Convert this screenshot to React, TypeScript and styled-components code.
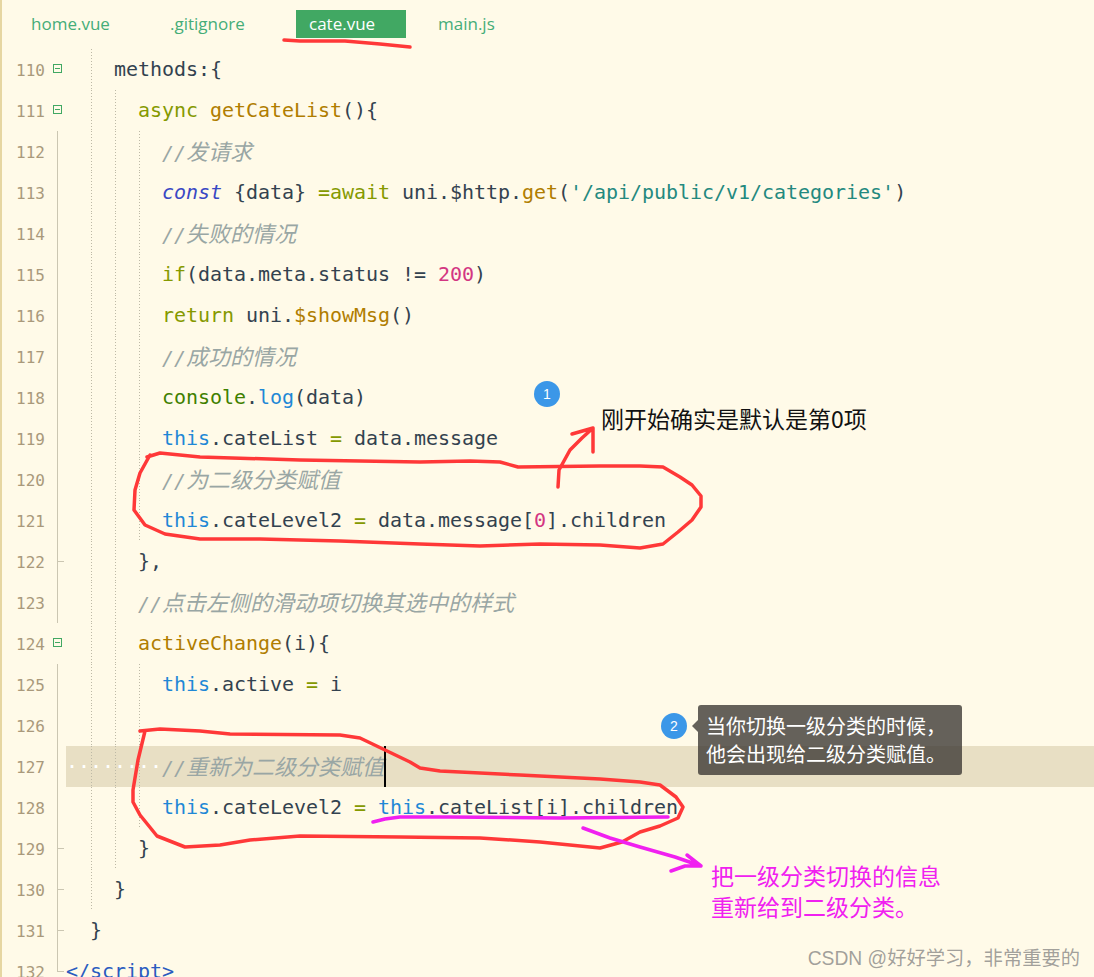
import { createGlobalStyle, styled } from "styled-components";

const GlobalStyle = createGlobalStyle`
  html, body {
    margin: 0;
    padding: 0;
    background: #fffae8;
  }
`;

const Page = styled.div`
  position: relative;
  width: 1094px;
  height: 977px;
  overflow: hidden;
  box-sizing: border-box;
  border-left: 2px solid #e6d6a2;
  background: #fffae8;
`;

const TabBar = styled.div`
  display: flex;
  align-items: flex-start;
  gap: 32px;
  height: 49px;
  padding: 10px 0 0 29px;
  box-sizing: border-box;
  font-family: "Open Sans", "Noto Sans", sans-serif;
  font-size: 17px;
`;

const Tab = styled.div<{ $active?: boolean; $width: number }>`
  width: ${(props) => props.$width}px;
  height: 28px;
  line-height: 28px;
  box-sizing: border-box;
  padding-left: ${(props) => (props.$active ? "13px" : "0")};
  color: ${(props) => (props.$active ? "#ffffff" : "#45ad78")};
  background: ${(props) => (props.$active ? "#41a863" : "transparent")};
`;

const Row = styled.div`
  display: flex;
  height: 41px;
  line-height: 41px;
  font-family: "DejaVu Sans Mono", "Noto Sans CJK SC", monospace;
  font-size: 20px;
  letter-spacing: -0.04px;
  color: #33424f;
`;

const LineNo = styled.div`
  width: 43px;
  flex: none;
  text-align: right;
  font-size: 16px;
  line-height: 44px;
  letter-spacing: 0;
  color: #a9997b;
`;

const Fold = styled.div`
  display: flex;
  align-items: center;
  width: 21px;
  padding-left: 12px;
  box-sizing: border-box;
  flex: none;
`;

const FoldLine = styled.span<{ $half?: boolean }>`
  align-self: flex-start;
  width: 1px;
  height: ${(props) => (props.$half ? "50%" : "100%")};
  background: #cbc6b2;
`;

const FoldTick = styled.span`
  width: 6px;
  height: 1px;
  background: #cbc6b2;
`;

const FoldBox = styled.span`
  display: flex;
  align-items: center;
  justify-content: center;
  width: 9px;
  height: 9px;
  margin: 0 0 2px -4px;
  box-sizing: border-box;
  border: 1px solid #41a863;

  &::after {
    content: "";
    width: 5px;
    height: 1px;
    background: #41a863;
  }
`;

const Code = styled.div<{ $active?: boolean }>`
  flex: 1;
  display: flex;
  white-space: pre;
  background: ${(props) => (props.$active ? "#e8dfc4" : "transparent")};
`;

const Indent = styled.span<{ $guide: boolean }>`
  width: 24px;
  flex: none;
  color: #ffffff;
  font-size: 20px;
  letter-spacing: 0;
  overflow: hidden;
  background-image: ${(props) =>
    props.$guide
      ? "repeating-linear-gradient(to bottom, #bdb9a6 0 1px, transparent 1px 3px)"
      : "none"};
  background-size: 1px 100%;
  background-position: 1px 0;
  background-repeat: no-repeat;
`;

const colors = {
  plain: "#33424f",
  key: "#859900",
  fn: "#b07d00",
  self: "#1f88d6",
  decl: "#3a48c4",
  tag: "#2a5cc0",
  str: "#24897f",
  num: "#d33682",
  green: "#3f8000",
};

const Token = styled.span<{ $kind: keyof typeof colors }>`
  color: ${(props) => colors[props.$kind]};
  font-style: ${(props) => (props.$kind === "decl" ? "italic" : "normal")};
`;

const Comment = styled.span`
  color: #99a6a4;
  font-style: italic;
  font-family: "Noto Sans CJK SC", sans-serif;
  font-size: 22px;
  line-height: 39px;
  letter-spacing: 0;
`;

const Slashes = styled.span`
  font-family: "DejaVu Sans Mono", monospace;
  font-size: 20px;
`;

const Caret = styled.span`
  width: 2px;
  flex: none;
  background: #000000;
`;

const Scribbles = styled.svg`
  position: absolute;
  left: -2px;
  top: 0;
  width: 1094px;
  height: 977px;
  fill: none;
  stroke-linejoin: round;
  stroke-linecap: round;
  stroke-width: 3.5;
  pointer-events: none;
`;

const Callout = styled.div<{ $gap: number; $left: number; $top: number }>`
  position: absolute;
  left: ${(props) => props.$left}px;
  top: ${(props) => props.$top}px;
  display: flex;
  align-items: flex-start;
  gap: ${(props) => props.$gap}px;
`;

const Badge = styled.div<{ $drop?: number }>`
  flex: none;
  width: 26px;
  height: 26px;
  margin-top: ${(props) => props.$drop ?? 0}px;
  border-radius: 50%;
  background: #3b97e8;
  color: #ffffff;
  font-family: "Liberation Sans", sans-serif;
  font-size: 14px;
  line-height: 26px;
  text-align: center;
`;

const Bubble = styled.div`
  position: relative;
  width: 264px;
  height: 70px;
  box-sizing: border-box;
  padding: 7px 8px;
  border-radius: 3px;
  background: rgba(58, 54, 50, 0.78);
  color: #ffffff;
  font-family: "Noto Sans CJK SC", sans-serif;
  font-size: 20px;
  line-height: 28px;
  white-space: pre;

  &::before {
    content: "";
    position: absolute;
    left: -6px;
    top: 15px;
    border: 6px solid transparent;
    border-left: 0;
    border-right-color: rgba(58, 54, 50, 0.78);
  }
`;

const Note = styled.div<{ $color: string; $drop?: number }>`
  margin-top: ${(props) => props.$drop ?? 0}px;
  color: ${(props) => props.$color};
  font-family: "Noto Sans CJK SC", sans-serif;
  font-size: 23px;
  line-height: 31px;
  white-space: pre;
`;

const Watermark = styled.div`
  position: absolute;
  right: 14px;
  bottom: 5px;
  color: rgba(120, 120, 120, 0.7);
  font-family: "Liberation Sans", "Noto Sans CJK SC", sans-serif;
  font-size: 19.3px;
  line-height: 26px;
  white-space: pre;
`;

type Kind = keyof typeof colors;
type Piece = [Kind, string];

interface Line {
  n: number;
  depth: number;
  fold?: "box" | "line" | "tick" | "end";
  comment?: string;
  active?: boolean;
  code?: Piece[];
}

const lines: Line[] = [
  { n: 110, depth: 2, fold: "box", code: [["plain", "methods:{"]] },
  {
    n: 111,
    depth: 3,
    fold: "box",
    code: [
      ["key", "async "],
      ["fn", "getCateList"],
      ["plain", "(){"],
    ],
  },
  { n: 112, depth: 4, fold: "line", comment: "发请求" },
  {
    n: 113,
    depth: 4,
    fold: "line",
    code: [
      ["decl", "const"],
      ["plain", " {data} "],
      ["key", "=await"],
      ["plain", " uni.$http."],
      ["fn", "get"],
      ["plain", "("],
      ["str", "'/api/public/v1/categories'"],
      ["plain", ")"],
    ],
  },
  { n: 114, depth: 4, fold: "line", comment: "失败的情况" },
  {
    n: 115,
    depth: 4,
    fold: "line",
    code: [
      ["key", "if"],
      ["plain", "(data.meta.status != "],
      ["num", "200"],
      ["plain", ")"],
    ],
  },
  {
    n: 116,
    depth: 4,
    fold: "line",
    code: [
      ["key", "return"],
      ["plain", " uni."],
      ["fn", "$showMsg"],
      ["plain", "()"],
    ],
  },
  { n: 117, depth: 4, fold: "line", comment: "成功的情况" },
  {
    n: 118,
    depth: 4,
    fold: "line",
    code: [
      ["green", "console"],
      ["plain", "."],
      ["self", "log"],
      ["plain", "(data)"],
    ],
  },
  {
    n: 119,
    depth: 4,
    fold: "line",
    code: [
      ["self", "this"],
      ["plain", ".cateList "],
      ["key", "="],
      ["plain", " data.message"],
    ],
  },
  { n: 120, depth: 4, fold: "line", comment: "为二级分类赋值" },
  {
    n: 121,
    depth: 4,
    fold: "line",
    code: [
      ["self", "this"],
      ["plain", ".cateLevel2 "],
      ["key", "="],
      ["plain", " data.message["],
      ["num", "0"],
      ["plain", "].children"],
    ],
  },
  { n: 122, depth: 3, fold: "tick", code: [["plain", "},"]] },
  { n: 123, depth: 3, fold: "line", comment: "点击左侧的滑动项切换其选中的样式" },
  {
    n: 124,
    depth: 3,
    fold: "box",
    code: [
      ["fn", "activeChange"],
      ["plain", "(i){"],
    ],
  },
  {
    n: 125,
    depth: 4,
    fold: "line",
    code: [
      ["self", "this"],
      ["plain", ".active "],
      ["key", "="],
      ["plain", " i"],
    ],
  },
  { n: 126, depth: 4, fold: "line" },
  { n: 127, depth: 4, fold: "line", comment: "重新为二级分类赋值", active: true },
  {
    n: 128,
    depth: 4,
    fold: "line",
    code: [
      ["self", "this"],
      ["plain", ".cateLevel2 "],
      ["key", "="],
      ["plain", " "],
      ["self", "this"],
      ["plain", ".cateList[i].children"],
    ],
  },
  { n: 129, depth: 3, fold: "tick", code: [["plain", "}"]] },
  { n: 130, depth: 2, fold: "tick", code: [["plain", "}"]] },
  { n: 131, depth: 1, fold: "tick", code: [["plain", "}"]] },
  { n: 132, depth: 0, fold: "end", code: [["tag", "</script>"]] },
];

const tabs = [
  { name: "home.vue", width: 107 },
  { name: ".gitignore", width: 94 },
  { name: "cate.vue", width: 110, active: true },
  { name: "main.js", width: 80 },
];

function CodeLine({ line }: { line: Line }) {
  return (
    <Row>
      <LineNo>{line.n}</LineNo>
      <Fold>
        {line.fold === "box" && <FoldBox />}
        {line.fold !== "box" && <FoldLine $half={line.fold === "end"} />}
        {(line.fold === "tick" || line.fold === "end") && <FoldTick />}
      </Fold>
      <Code $active={line.active}>
        {Array.from({ length: line.depth }, (_, i) => (
          <Indent key={i} $guide={i > 0}>
            {line.active ? "··" : ""}
          </Indent>
        ))}
        {line.comment && (
          <Comment>
            <Slashes>//</Slashes>
            {line.comment}
          </Comment>
        )}
        {line.active && <Caret />}
        {line.code?.map(([kind, text], i) => (
          <Token key={i} $kind={kind}>
            {text}
          </Token>
        ))}
      </Code>
    </Row>
  );
}

export default function App() {
  return (
    <Page>
      <GlobalStyle />
      <TabBar>
        {tabs.map((tab) => (
          <Tab key={tab.name} $width={tab.width} $active={tab.active}>
            {tab.name}
          </Tab>
        ))}
      </TabBar>
      {lines.map((line) => (
        <CodeLine key={line.n} line={line} />
      ))}
      <Scribbles viewBox="0 0 1094 977">
        <g stroke="#ff3838">
          <path d="M284 40 L300 41 L345 41 L380 44 L410 47" />
          <path d="M147 457 L160 453 L200 457 L300 460 L420 462 L470 461 L500 462 L518 467 L600 466 L640 466 L663 467 L680 477 L692 485 L701 496 L701 507 L692 520 L678 532 L663 544 L640 548 L600 545 L540 544 L480 546 L420 544 L340 541 L260 539 L200 539 L165 534 L145 525 L134 510 L135 490 L140 473 L150 455" />
          <path d="M558 487 L559 470 L570 450 L582 438 L593 428 M572 434 L593 428 L593 452" />
          <path d="M140 731 L160 729 L200 731 L230 734 L340 735 L360 738 L385 750 L410 762 L420 768 L440 771 L520 775 L600 779 L640 782 L660 785 L676 797 L683 807 L678 818 L660 826 L640 832 L622 842 L600 848 L540 842 L480 838 L400 837 L300 836 L250 840 L220 845 L185 847 L157 836 L140 815 L133 802 L133 790 L138 760 L145 731" />
        </g>
        <g stroke="#f020f0">
          <path d="M373 822 L385 819 L400 817 L450 817 L560 818 L668 817" />
          <path d="M583 828 L610 838 L640 847 L675 857 L701 866 M671 871 L685 866 L701 866 L687 855" />
        </g>
      </Scribbles>
      <Callout $left={532} $top={381} $gap={41}>
        <Badge>1</Badge>
        <Note $color="#111111" $drop={22}>
          刚开始确实是默认是第0项
        </Note>
      </Callout>
      <Callout $left={659} $top={705} $gap={11}>
        <Badge $drop={8}>2</Badge>
        <Bubble>{"当你切换一级分类的时候，\n他会出现给二级分类赋值。"}</Bubble>
      </Callout>
      <Callout $left={709} $top={860} $gap={0}>
        <Note $color="#f020f0">{"把一级分类切换的信息\n重新给到二级分类。"}</Note>
      </Callout>
      <Watermark>CSDN @好好学习，非常重要的</Watermark>
    </Page>
  );
}
